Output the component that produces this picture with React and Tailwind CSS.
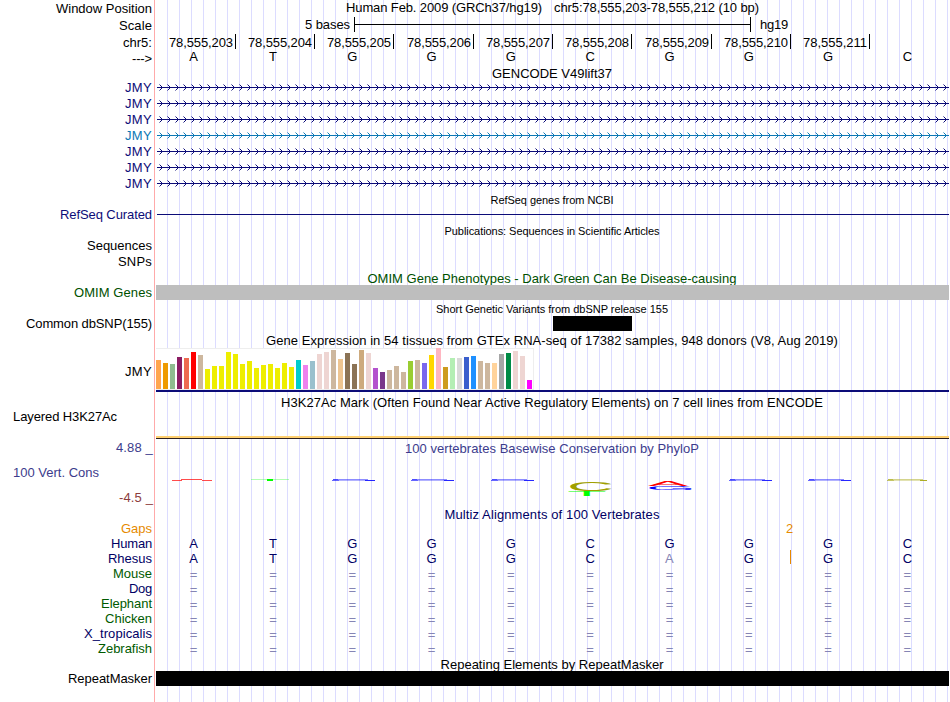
import { useLayoutEffect, useRef, useState } from "react";

// Text run tracked out to a given advance width.
function Fit({ w, className = "", children }) {
  const ref = useRef(null);
  const [spacing, setSpacing] = useState(0);
  useLayoutEffect(() => {
    const natural = ref.current.getBoundingClientRect().width;
    setSpacing((w - natural) / children.length);
  }, []);
  return (
    <span ref={ref} className={"inline-block whitespace-pre " + className} style={{ letterSpacing: spacing }}>
      {children}
    </span>
  );
}

function Row({ h, label, w, labelClass = "", children }) {
  return (
    <div className={"flex " + h}>
      <div className={"flex w-[156px] shrink-0 justify-end pr-1 " + labelClass}>
        {label && <Fit w={w}>{label}</Fit>}
      </div>
      <div className="relative min-w-0 grow">{children}</div>
    </div>
  );
}

function Title({ h, w, className = "", children }) {
  return (
    <div className={"ml-[155px] flex justify-center " + h + " " + className}>
      <Fit w={w}>{children}</Fit>
    </div>
  );
}

function Bases({ seq, className = "" }) {
  return (
    <div className={"-ml-0.5 grid w-[793px] grid-cols-10 text-center " + className}>
      {seq.split("").map((b, i) => (
        <span key={i} className={b === "a" || b === "=" ? "text-[#8585b5]" : ""}>
          {b.toUpperCase()}
        </span>
      ))}
    </div>
  );
}

function Transcript({ className, label }) {
  return (
    <Row h="h-4" label="JMY" w={27} labelClass={label}>
      <svg width="793" height="15" className={"block " + className}>
        <rect x="1" y="7" width="792" height="1" fill="currentColor" />
        {Array.from({ length: 99 }, (_, i) => (
          <path
            key={i}
            d={`M${3.5 + i * 8} 4.5l3 3l-3 3`}
            fill="none"
            stroke="currentColor"
            strokeWidth="1"
          />
        ))}
      </svg>
    </Row>
  );
}

const POSITIONS = [
  ["78,555,203", "w-[80px]"],
  ["78,555,204", "w-[79px]"],
  ["78,555,205", "w-[79px]"],
  ["78,555,206", "w-[80px]"],
  ["78,555,207", "w-[79px]"],
  ["78,555,208", "w-[79px]"],
  ["78,555,209", "w-[80px]"],
  ["78,555,210", "w-[79px]"],
  ["78,555,211", "w-[79px]"],
];

const Y = "#EEEE00";
const TISSUE_COLORS = [
  "#FFA54F", "#EE9A00", "#8FBC8F", "#8B1C62", "#EE6A50", "#FF0000", "#CDB79E",
  Y, Y, Y, Y, Y, Y, Y, Y, Y, Y, Y, Y, Y,
  "#00CDCD", "#EE82EE", "#9AC0CD", "#EED5D2", "#EED5D2", "#CDB79E", "#EEC591",
  "#8B7355", "#8B7355", "#CDAA7D", "#EED5D2", "#B452CD", "#7A378B", "#CDB79E",
  "#CDB79E", "#CDB79E", "#9ACD32", "#CDB79E", "#7A67EE", "#FFD700", "#FFB6C1",
  "#CD9B1D", "#B4EEB4", "#D9D9D9", "#3A5FCD", "#1E90FF", "#CDB79E", "#CDB79E",
  "#FFD39B", "#A6A6A6", "#008B45", "#EED5D2", "#EED5D2", "#FF00FF",
];
const TISSUE_HEIGHTS = [
  29, 26, 25, 32, 31, 37, 34, 20, 23, 23, 37, 35, 25, 28, 21, 24, 25, 21, 26, 22,
  29, 24, 28, 35, 37, 39, 30, 36, 25, 39, 36, 21, 17, 19, 23, 17, 28, 29, 26, 34,
  41, 22, 31, 31, 32, 33, 28, 26, 26, 35, 36, 38, 33, 9,
];

// Sequence-logo letters: glyph, left, baseline, x scale, y scale, colour
const LOGO = [
  ["C", 411, 34.6, 0.65, 0.135, "#a0a000"],
  ["T", 411, 40, 0.65, 0.075, "#00ff00"],
  ["A", 492, 30.2, 0.6, 0.07, "#ff0000"],
  ["G", 490, 33.8, 0.64, 0.055, "#0000ff"],
];

// Near-zero scores, drawn as slivers: left edge and colour
const SLIVERS = [
  [176, "#0000ff"],
  [255, "#0000ff"],
  [335, "#0000ff"],
  [573, "#0000ff"],
  [652, "#0000ff"],
  [731, "#a0a000"],
];

const NAVY = "text-[#000064]";
const GREEN = "text-[#005a00]";
const SPECIES = [
  ["Human", 41, NAVY, "ATGGGCGGGC"],
  ["Rhesus", 44, NAVY, "ATGGGCaGGC"],
  ["Mouse", 39, GREEN, "=========="],
  ["Dog", 23, NAVY, "=========="],
  ["Elephant", 51, GREEN, "=========="],
  ["Chicken", 47, GREEN, "=========="],
  ["X_tropicalis", 68, NAVY, "=========="],
  ["Zebrafish", 54, GREEN, "=========="],
];

export default function App() {
  return (
    <div className="relative h-[702px] w-[950px] overflow-hidden bg-white font-['Liberation_Sans',Arial,sans-serif] text-[13px] leading-[15px] text-black">
      <div className="absolute inset-y-0 left-[154px] w-px bg-[#ffaaaa]" />
      <div className="absolute inset-y-0 left-[156px] right-px bg-[repeating-linear-gradient(to_right,transparent_0px,transparent_11px,#dcdcff_11px,#dcdcff_12px)]" />

      <div className="relative w-[949px]">
        <Row h="h-[17px]" label="Window Position" w={96} labelClass="pt-px">
          <div className="flex gap-3 pl-[190px]">
            <Fit w={196}>Human Feb. 2009 (GRCh37/hg19)</Fit>
            <Fit w={205}>chr5:78,555,203-78,555,212 (10 bp)</Fit>
          </div>
        </Row>
        <Row h="h-[17px]" label="Scale" w={33} labelClass="pt-px">
          <div className="flex pl-[149px]">
            <Fit w={45}>5 bases</Fit>
            <div className="ml-1 flex h-[15px] w-[397px] items-center border-x border-black">
              <div className="h-px w-full bg-black" />
            </div>
            <Fit w={28} className="ml-[9px]">hg19</Fit>
          </div>
        </Row>
        <Row h="h-[15px]" label="chr5:" w={29} labelClass="pt-px">
          <div className="flex">
            {POSITIONS.map(([n, width]) => (
              <div key={n} className={"flex h-[15px] justify-end border-r border-black pr-0.5 pt-px " + width}>
                <Fit w={64}>{n}</Fit>
              </div>
            ))}
          </div>
        </Row>
        <Row h="h-[17px]" label="--->" w={20} labelClass="pt-0.5">
          <Bases seq="ATGGGCGGGC" />
        </Row>

        <Title h="h-[14px]" w={120}>GENCODE V49lift37</Title>
        {Array.from({ length: 7 }, (_, i) => (
          <Transcript
            key={i}
            label={i === 3 ? "text-[#0c78b4]" : "text-[#0c0c78]"}
            className={i === 3 ? "text-[#0c78b4]" : "text-[#0c0c78]"}
          />
        ))}

        <Title h="h-[15px]" w={123} className="pt-px text-[11px]">RefSeq genes from NCBI</Title>
        <Row h="h-[15px]" label="RefSeq Curated" w={92} labelClass="text-[#0c0c78]">
          <div className="mt-[7px] ml-px h-px bg-[#0c0c78]" />
        </Row>
        <Title h="h-4" w={215} className="pt-0.5 text-[11px]">Publications: Sequences in Scientific Articles</Title>
        <Row h="h-4" label="Sequences" w={65} />
        <Row h="h-4" label="SNPs" w={34} />

        <Title h="h-[15px]" w={369} className="pt-px text-[#005000]">OMIM Gene Phenotypes - Dark Green Can Be Disease-causing</Title>
        <Row h="h-[15px]" label="OMIM Genes" w={78} labelClass="text-[#005000]">
          <div className="h-[15px] bg-[#bebebe]" />
        </Row>

        <Title h="h-4" w={232} className="pt-0.5 text-[11px]">Short Genetic Variants from dbSNP release 155</Title>
        <Row h="h-[15px]" label="Common dbSNP(155)" w={126}>
          <div className="ml-[397px] h-[15px] w-[79px] bg-black" />
        </Row>

        <Title h="h-[17px]" w={572} className="pt-0.5">Gene Expression in 54 tissues from GTEx RNA-seq of 17382 samples, 948 donors (V8, Aug 2019)</Title>
        <Row h="h-[44px]" label="JMY" w={27} labelClass="pt-4">
          <div className="flex h-[42px] w-[378px] items-end gap-0.5 border border-l-0 border-[#eeeeee] bg-white">
            {TISSUE_HEIGHTS.map((v, i) => (
              <div key={i} className="w-[5px] shrink-0" style={{ height: v, backgroundColor: TISSUE_COLORS[i] }} />
            ))}
          </div>
          <div className="h-0.5 bg-[#0c0c78]" />
        </Row>

        <Title h="h-[17px]" w={542} className="pt-[3px]">H3K27Ac Mark (Often Found Near Active Regulatory Elements) on 7 cell lines from ENCODE</Title>
        <div className="flex h-[30px]">
          <div className="w-[156px] shrink-0 pl-[13px]">
            <Fit w={104}>Layered H3K27Ac</Fit>
          </div>
          <div className="mt-[27px] h-[3px] grow border-b border-[#2d2020] bg-[#ffd070]" />
        </div>

        <div className="flex h-[68px]">
          <div className="flex w-[153px] shrink-0 flex-col text-[#3c3c8c]">
            <Fit w={37} className="mt-px self-end">4.88 _</Fit>
            <Fit w={86} className="mt-[10px] ml-[13px] self-start">100 Vert. Cons</Fit>
            <Fit w={34} className="mt-[10px] self-end text-[#8c3c3c]">-4.5 _</Fit>
          </div>
          <div className="ml-[3px] grow">
            <div className="-ml-px flex h-[17px] justify-center pt-0.5 text-[#3c3c8c]">
              <Fit w={294}>100 vertebrates Basewise Conservation by PhyloP</Fit>
            </div>
            <svg width="793" height="51" className="block">
              <g fill="#ff0000">
                <rect x="25" y="23" width="21" height="1" opacity="0.7" />
                <rect x="16" y="24" width="10" height="1" opacity="0.7" />
                <rect x="46" y="24" width="10" height="1" opacity="0.7" />
              </g>
              <g fill="#00ff00">
                <rect x="95" y="23" width="38" height="1" opacity="0.3" />
                <rect x="111" y="23" width="6" height="2" />
              </g>
              {SLIVERS.map(([x, color]) => (
                <g key={x} fill={color}>
                  <rect x={x + 6} y="23" width="30" height="1" opacity="0.45" />
                  <rect x={x + 1} y="23" width="5" height="1" opacity="0.7" />
                  <rect x={x} y="24" width="7" height="1" opacity="0.6" />
                  <rect x={x + 7} y="24" width="26" height="1" opacity="0.3" />
                  <rect x={x + 33} y="24" width={color === "#0000ff" ? 10 : 7} height="1" opacity="0.85" />
                </g>
              ))}
              {LOGO.map(([c, x, y, sx, sy, color], i) => (
                <text
                  key={i}
                  transform={`translate(${x} ${y}) scale(${sx} ${sy})`}
                  fontSize="100"
                  fill={color}
                >
                  {c}
                </text>
              ))}
            </svg>
          </div>
        </div>

        <Title h="h-[14px]" w={215} className={NAVY}>Multiz Alignments of 100 Vertebrates</Title>
        <Row h="h-[15px]" label="Gaps" w={31} labelClass="text-[#e68a00]">
          <div className="pl-[630px] text-[#e68a00]">2</div>
        </Row>
        {SPECIES.map(([name, w, color, seq]) => (
          <Row key={name} h="h-[15px]" label={name} w={w} labelClass={color}>
            <Bases seq={seq} className={seq[0] === "=" ? "pt-px text-[#000064]" : "text-[#000064]"} />
            {name === "Rhesus" && <div className="absolute left-[634px] top-[-1px] h-[14px] w-px bg-[#e68a00]" />}
          </Row>
        ))}

        <Title h="h-[15px]" w={223} className="pt-px">Repeating Elements by RepeatMasker</Title>
        <Row h="h-[15px]" label="RepeatMasker" w={84}>
          <div className="h-[15px] bg-black" />
        </Row>
      </div>
    </div>
  );
}
